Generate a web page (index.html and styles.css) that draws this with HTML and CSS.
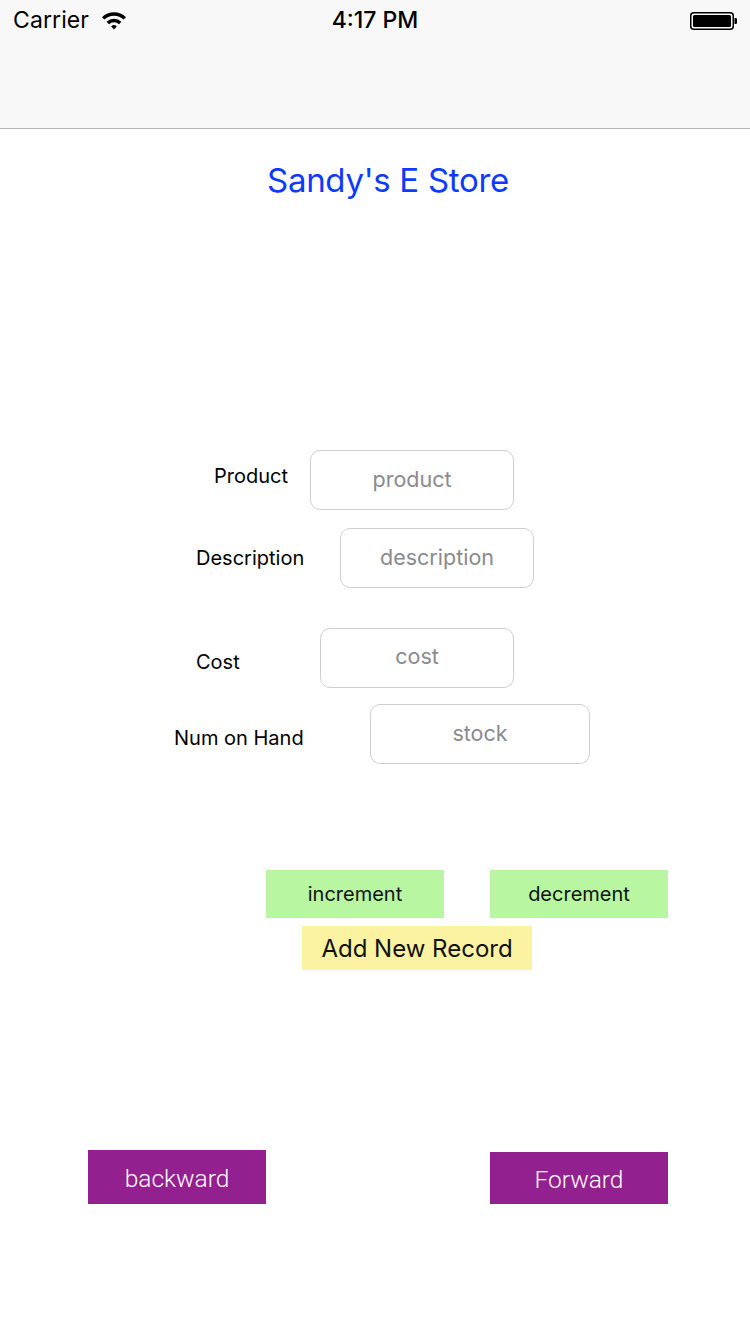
FILE: index.html
```html
<!DOCTYPE html>
<html lang="en">
<head>
<meta charset="utf-8">
<title>Sandy's E Store</title>
<link rel="stylesheet" href="styles.css">
</head>
<body>
<header class="topbar">
  <div class="status">
    <div class="status-left">
      <span class="carrier">Carrier</span>
      <svg class="wifi" width="26" height="20" viewBox="0 0 26 20">
        <path d="M1 7.2 A17 17 0 0 1 25 7.2 L22.6 9.6 A13.6 13.6 0 0 0 3.4 9.6 Z" fill="#000"/>
        <path d="M5.6 11.8 A10.5 10.5 0 0 1 20.4 11.8 L18 14.2 A7.1 7.1 0 0 0 8 14.2 Z" fill="#000"/>
        <path d="M10.2 16.4 A4 4 0 0 1 15.8 16.4 L13 19.4 Z" fill="#000"/>
      </svg>
    </div>
    <span class="time">4:17 PM</span>
    <div class="status-right">
      <svg class="battery" width="48" height="18" viewBox="0 0 48 18">
        <rect x="0.75" y="0.75" width="42.5" height="16.5" rx="3" fill="none" stroke="#000" stroke-width="1.5"/>
        <rect x="3" y="3" width="38" height="12" rx="1.5" fill="#000"/>
        <path d="M44.5 6 h1.2 a1.3 1.3 0 0 1 1.3 1.3 v3.4 a1.3 1.3 0 0 1 -1.3 1.3 h-1.2 Z" fill="#000"/>
      </svg>
    </div>
  </div>
</header>

<main class="content">
  <h1 class="title">Sandy's E Store</h1>

  <section class="form">
    <div class="row row-product">
      <label class="label">Product</label>
      <div class="field field-product">product</div>
    </div>
    <div class="row row-desc">
      <label class="label">Description</label>
      <div class="field field-desc">description</div>
    </div>
    <div class="row row-cost">
      <label class="label">Cost</label>
      <div class="field field-cost">cost</div>
    </div>
    <div class="row row-stock">
      <label class="label">Num on Hand</label>
      <div class="field field-stock">stock</div>
    </div>
  </section>

  <section class="actions">
    <div class="step-row">
      <button class="btn btn-green">increment</button>
      <button class="btn btn-green">decrement</button>
    </div>
    <div class="add-row">
      <button class="btn btn-yellow">Add New Record</button>
    </div>
  </section>

  <section class="nav-row">
    <button class="btn btn-purple btn-back">backward</button>
    <button class="btn btn-purple btn-fwd">Forward</button>
  </section>
</main>
</body>
</html>
```

FILE: styles.css
```css
html, body {
  margin: 0;
  padding: 0;
  background: #ffffff;
}

body {
  width: 750px;
  min-height: 1334px;
  font-family: "Inter", "Noto Sans", "Liberation Sans", sans-serif;
  color: #000;
}

.topbar {
  height: 128px;
  background: #f8f8f8;
  border-bottom: 1px solid #b2b2b2;
}

.status {
  height: 40px;
  display: flex;
  align-items: center;
  justify-content: space-between;
  padding: 0 12px 0 13px;
  position: relative;
}

.status-left {
  display: flex;
  align-items: center;
  gap: 12px;
}

.carrier {
  font-size: 23px;
  letter-spacing: 0.1px;
}

.wifi {
  margin-top: -1px;
}

.time {
  position: absolute;
  left: 0;
  right: 0;
  text-align: center;
  font-size: 23px;
  font-weight: 500;
  pointer-events: none;
}

.status-right {
  display: flex;
  align-items: center;
}

.battery {
  display: block;
  margin-top: 1px;
}

.content {
  display: block;
}

.title {
  margin: 31px 0 0;
  text-align: center;
  font-size: 33px;
  line-height: 40px;
  font-weight: 400;
  color: #0a3bff;
  letter-spacing: -0.3px;
  padding-left: 26px;
}

.form {
  margin-top: 250px;
}

.row {
  display: flex;
  align-items: flex-start;
}

.label {
  font-size: 20px;
  line-height: 24px;
  flex: none;
}

.field {
  box-sizing: border-box;
  height: 60px;
  border: 1px solid #cfcfcf;
  border-radius: 10px;
  display: flex;
  align-items: center;
  justify-content: center;
  font-size: 21.5px;
  color: #8a8a8f;
  background: #fff;
}

.row-product {
  padding-left: 214px;
}
.row-product .label {
  width: 96px;
  margin-top: 14px;
}
.field-product {
  width: 204px;
  padding-bottom: 2px;
}

.row-desc {
  padding-left: 196px;
  margin-top: 18px;
}
.row-desc .label {
  width: 144px;
  margin-top: 18px;
}
.field-desc {
  width: 194px;
  padding-bottom: 2px;
}

.row-cost {
  padding-left: 196px;
  margin-top: 40px;
}
.row-cost .label {
  width: 124px;
  margin-top: 22px;
}
.field-cost {
  width: 194px;
  padding-bottom: 4px;
}

.row-stock {
  padding-left: 174px;
  margin-top: 16px;
}
.row-stock .label {
  width: 196px;
  margin-top: 22px;
}
.field-stock {
  width: 220px;
  padding-bottom: 2px;
}

.actions {
  margin-top: 106px;
}

.btn {
  border: none;
  margin: 0;
  padding: 0;
  font-family: inherit;
  display: flex;
  align-items: center;
  justify-content: center;
  cursor: pointer;
}

.step-row {
  display: flex;
  gap: 46px;
  padding-left: 266px;
}

.btn-green {
  width: 178px;
  height: 48px;
  background: #b8f6a2;
  color: #111;
  font-size: 20px;
}

.add-row {
  display: flex;
  padding-left: 302px;
  margin-top: 8px;
}

.btn-yellow {
  width: 230px;
  height: 44px;
  background: #fbf3a2;
  color: #111;
  font-size: 24px;
}

.nav-row {
  display: flex;
  align-items: flex-end;
  gap: 224px;
  padding-left: 88px;
  margin-top: 180px;
}

.btn-purple {
  width: 178px;
  background: #93208f;
  color: #fff;
  font-family: "Roboto", "Liberation Sans", sans-serif;
  font-size: 24.5px;
  font-weight: 300;
}

.btn-back {
  height: 54px;
  padding-top: 2px;
}

.btn-fwd {
  height: 52px;
  padding-top: 2px;
}
```
